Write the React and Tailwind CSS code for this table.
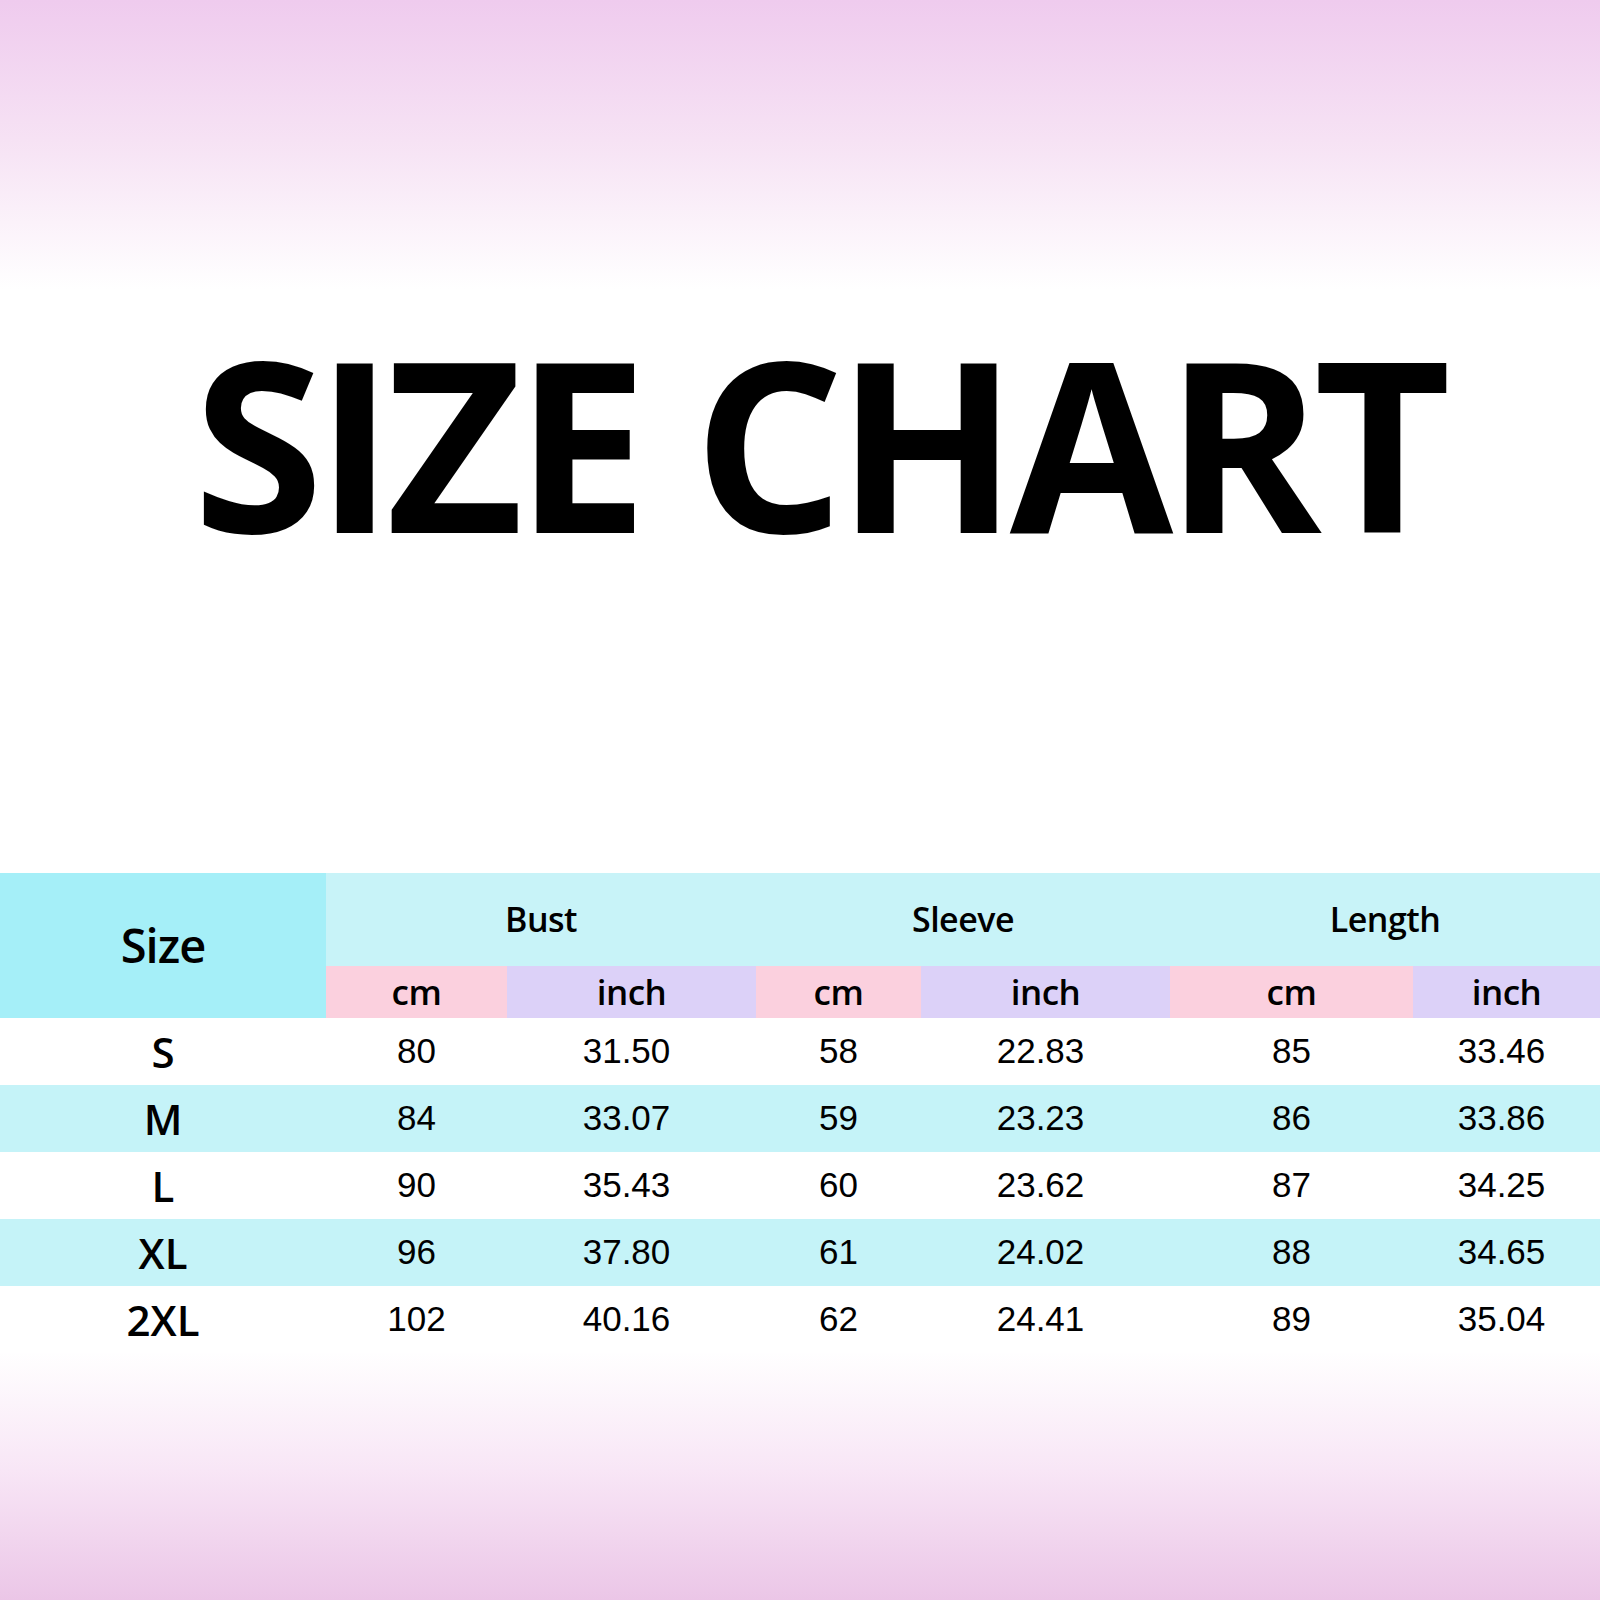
const columns = [
  { group: 'Bust', units: ['cm', 'inch'] },
  { group: 'Sleeve', units: ['cm', 'inch'] },
  { group: 'Length', units: ['cm', 'inch'] },
];

const rows = [
  ['S', '80', '31.50', '58', '22.83', '85', '33.46'],
  ['M', '84', '33.07', '59', '23.23', '86', '33.86'],
  ['L', '90', '35.43', '60', '23.62', '87', '34.25'],
  ['XL', '96', '37.80', '61', '24.02', '88', '34.65'],
  ['2XL', '102', '40.16', '62', '24.41', '89', '35.04'],
];

const head = { fontFamily: '"Open Sans", "Noto Sans", sans-serif' };
const num = { fontFamily: '"Liberation Sans", Arial, sans-serif' };

const SizeChart = () => {
  return (
    <div className="w-[1600px] h-[1600px] flex flex-col bg-[linear-gradient(to_bottom,#efcbee_0px,#f6e2f4_140px,#fff_290px,#fff_1350px,#f8e6f6_1470px,#ebc6e7_1600px)] text-black">
      <div className="h-[873px] flex justify-center pt-[323px] pl-[36px]">
        <h1 style={head} className="text-[237px] font-bold leading-none tracking-[-8px]">SIZE CHART</h1>
      </div>

      <div className="grid grid-cols-[326px_181px_249px_165px_249px_243px_187px]" style={head}>
        <div className="row-span-2 bg-[#a5eff8] flex items-center justify-center text-[47px] font-semibold tracking-[-1px]">
          Size
        </div>
        {columns.map((c) => (
          <div key={c.group} className="col-span-2 h-[93px] bg-[#c8f3f8] flex items-center justify-center text-[34px] font-semibold tracking-[-0.5px]">
            {c.group}
          </div>
        ))}
        {columns.map((c) =>
          c.units.map((u) => (
            <div
              key={c.group + u}
              className={`h-[52px] flex items-center justify-center text-[35px] font-semibold tracking-[-0.5px] ${u === 'cm' ? 'bg-[#fbd0de]' : 'bg-[#dcd1f8]'}`}
            >
              {u}
            </div>
          ))
        )}

        {rows.map((r, i) => (
          <div key={r[0]} className={`col-span-7 grid grid-cols-subgrid h-[67px] ${i % 2 ? 'bg-[#c5f3f8]' : 'bg-white'}`}>
            {r.map((v, j) => (
              <div
                key={j}
                style={j === 0 ? head : num}
                className={`flex items-center justify-center ${j === 0 ? 'text-[42px] font-semibold' : 'text-[35px]'} ${j > 0 && j % 2 === 0 ? 'pr-[10px]' : ''}`}
              >
                {v}
              </div>
            ))}
          </div>
        ))}
      </div>
    </div>
  );
};

export default function App() {
  return <SizeChart />;
}
